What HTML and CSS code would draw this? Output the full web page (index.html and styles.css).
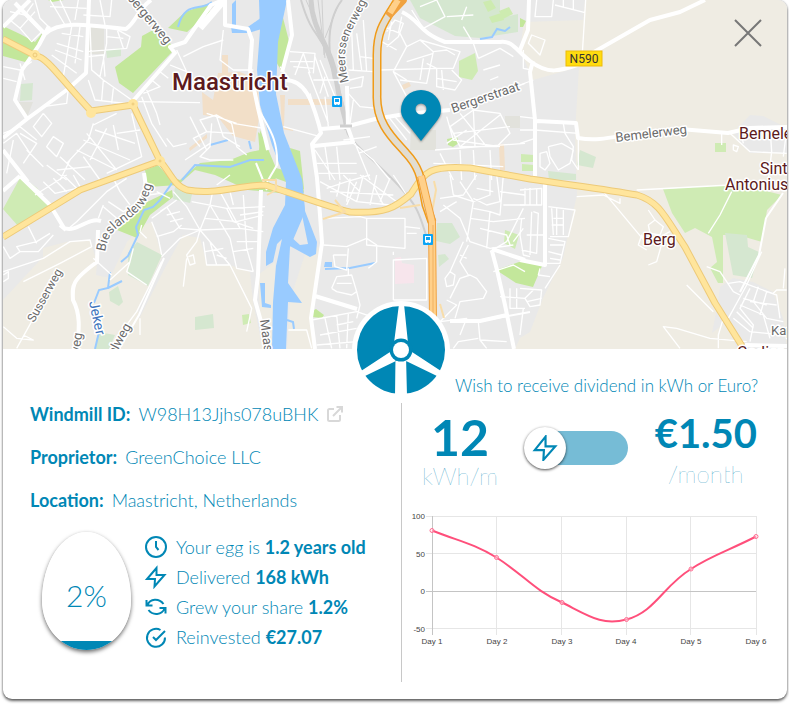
FILE: index.html
```
<!DOCTYPE html>
<html lang="en">
<head>
<meta charset="utf-8">
<meta name="viewport" content="width=device-width, initial-scale=1">
<title>Windmill details</title>
<link rel="stylesheet" href="styles.css">
</head>
<body>
<main class="card">
  <section class="map" aria-label="Map of Maastricht">
    <svg class="map-art" viewBox="3 0 784 349" preserveAspectRatio="xMidYMid slice">
      <rect x="3" width="784" height="349" fill="#e9e9e9"/>
      <!-- countryside -->
      <g fill="#efece3">
        <path d="M585 0H787V349H515L520 338 530 332 543 298 563 258 573 212 577 195 575 133 579 67 533 80 520 50 524 22 583 20z"/>
        <path d="M3 300 43 257 43 248 66 242 90 240 97 262 96 275 110 278 127 242 143 225 152 222 162 257 138 310 139 319 165 268 183 235 200 238 207 265 230 265 250 272 253 302 263 349H3z"/>
        <path d="M307 248 323 247 310 318 315 349H287L290 300zM258 275 275 262 275 349H262z"/>
      </g>
      <path d="M720 287 733 278 753 282 773 292 783 318 787 349H737L726 322 712 333 717 308zM733 133 750 115 763 116 787 128V153H750z" fill="#e9e9e9"/>
      <!-- parks -->
      <g fill="#c3e79b">
        <path d="M3 26 20 34 35 42 43 32 32 58 25 62 3 56zM48 0h16l-12 2zM115 67 141 47 142 36 153 30 171 44 172 52 133 93 119 83zM168 28 185 12 207 4 210 12 187 32z"/>
        <path d="M258 132 266 140 276 180 262 180zM145 170 158 165 167 175 180 180 200 163 230 160 250 152 260 150 267 180 280 193 248 190 215 175 195 170 178 185 148 187zM117 230 137 213 147 202 172 190 173 197 150 215 137 238zM281 10 290 45 282 72 275 60zM260 130 276 168 302 175 304 193 289 183 275 178 258 172zM290 148l10 3 4 38-8 3zM520 18l6 3-3 6h-3zM447 139l10-2 2 6-6 4-5-2zM496 270 522 261 542 266 533 287 516 283zM312 311l4-2 8 6-2 3-10-1z"/>
      </g>
      <g fill="#cfebb4">
        <path d="M3 209 21 176 37 188 50 207 18 226zM663 189 737 184 782 195 767 210 762 242 738 235 723 235 723 283 718 283 710 268 717 262 712 237 695 228 685 233 672 213zM459 61 475 53 478 71 472 80 459 77zM505 230l14 5-4 14-11-6zM521 154l13 1v7h-13zM522 164l12 1v6h-12zM715 143h11v9h-11zM242 315l7-1 2 9-8 2z"/>
      </g>
      <g fill="#d5e7d0">
        <path d="M106 50 121 48 121 56 107 58zM21 84 33 83 32 100 20 101zM410 0H500V18L518 14V32L480 38 455 36 420 18zM437 223 452 223 460 237 450 244 436 241zM438 255l7-1 4 5-10 8zM128 253 137 242 162 255 148 286 128 275zM109 292 118 286 123 302 119 306 110 301zM98 332 115 335 109 349H95zM195 317 213 314 214 328 195 330zM175 187 193 190 190 203 173 199zM580 150 596 157 593 168 577 165zM548 171l28 3v6h-27zM725 233 747 235 748 247 759 252 752 278 733 275z"/>
        <path d="M483 2l8-2 5 8-8 4zM499 11l10-4 4 7-10 5zM489 17l12-4 3 7-12 3z" fill="#cdebb0"/>
      </g>
      <path d="M213 100 218 73 240 72 258 80 259 118 255 142 233 136 218 117 203 115 202 92zM222 55h6v20h-6zM189 148l18-14v4l-17 13z" fill="#f2dfc8"/>
      <g fill="#e2e2dc"><path d="M88 36 89 27h15v27H89zM411 130h25v20h-26zM505 116h15v12h-15zM18 102h15l-7 18z"/></g>
      <path d="M395 258l6-1 1 6 12 2v18l-19 1z" fill="#f7e5ec"/>
      <g fill="#f2dfc8"><path d="M280 95h5l-1 32 9 2v2l-11-2zM288 99h45v6h-45zM402 85l7-3 2 4-8 4zM499 144h5l1 26h-5z"/></g>
      <!-- river -->
      <g fill="#99cbff">
        <path d="M259 0H287L278 42 276 94 284 133 302 179 305 212 290 247 288 283 302 303 288 302 286 349H272L273 302 276 266 282 239 277 244 273 262 266 266 266 252 273 228 285 205 286 182 272 145 260 105 257 70 260 30z"/>
        <path d="M302 179 305 211 317 242 316 254 310 257 288 245 290 236 300 245 308 244 302 215z"/>
        <path d="M231 27 245 29 262 17V29L248 33 232 33zM236 0v26h-4V4zM325 262h7v5h-8zM260 283l5 0v20l6 2v3l-9-1z"/>
      </g>
      <g fill="none" stroke="#99cbff" stroke-width="2">
        <path d="M178 27C185 0 200 12 212 2M172 183 160 200 153 207 144 210 136 227 138 235 128 256 121 262M110 272 108 288 99 290 94 303M108 288 122 281M99 332 95 349M182 180 195 165 230 167 250 160 264 160M325 269 350 268 375 263M480 39 492 37 497 29 505 31 510 27M287 320 293 322 294 329M210 145 228 140M249 141l2 8"/>
      </g>
      <!-- railway -->
      <g fill="none" stroke="#cfcfcf">
        <path d="M301 0C312 38 320 32 327 54S345 100 347 132C350 142 380 165 399 186S419 213 426 235" stroke-width="2"/>
        <path d="M311 0C312 31 332 48 336 78S344 107 347 130" stroke-width="5"/><path d="M342 0C322 26 331 65 334 80" stroke-width="2"/>
        <path d="M306 0 326 46M318 0 325 58M322 0 324 55M337 8 325 38" stroke-width="1"/>
      </g>
      <!-- side streets, drawn per map tile at three times the final scale -->
      <g class="streets">
        <g transform="scale(.333333)">
          <path d="M30 60 60 85 95 125 125 95 75 45 30 35M60 85 105 35M75 45 100 10M105 0 120 55 150 85M150 0 195 75M180 0 215 75M235 0 225 60M150 20 260 25M250 45 330 50 335 0M300 0 315 75M170 130 250 155M215 80 190 230M240 80 225 190M185 100 250 110M165 150 245 180M155 165 230 220M320 80 320 130 300 230 275 210M350 85 370 145M320 110 370 115M270 75 275 210 310 240 395 300M265 170 310 165 315 230M335 80 390 110 380 145 260 155M10 200 60 210 95 185M10 235 50 245M60 190 75 240M205 265 200 310 130 320M265 240 285 300 375 310M310 240 305 300M340 265 335 310M415 305 600 308M425 290 455 370 500 440M440 270 470 340 480 375M455 240 480 260 430 280M480 215 505 235M530 150 560 215 510 195M550 170 610 140 670 120M280 370 265 420 200 490M280 375 350 340M395 340 425 470 320 520M285 390 405 430M250 420 390 480M230 450 350 510M260 400 350 510M320 385 270 480M340 375 355 450M350 400 420 390M10 400 60 380 110 420M10 430 50 400 90 460M40 420 20 520M60 400 110 430 70 490M80 450 130 500M130 340 155 370 125 410 100 380 130 340M160 410 190 430 170 470 140 440zM180 470 255 540M170 510 270 500M210 480 180 540M250 470 300 540M140 495 200 540"/>
          <path d="M600 440 580 415 620 395 600 360 650 345 695 370 710 440 740 465M620 340 710 370M620 395 700 400M635 370 630 440 600 470 630 480 700 480M650 350 670 410 720 440M700 370 790 385M555 480 630 430M570 350 620 450M500 415 520 440 560 430M670 90 660 180 700 210 760 210"/>
        </g>
        <g transform="translate(260) scale(.333333)">
          <path d="M90 155 165 160 160 220M90 185 160 185M105 225 130 160 150 220M100 200 160 205M145 215 205 370M165 170 205 290M180 180 225 290M160 240 240 240M150 280 180 385M195 290 205 380M90 240 60 200M270 240 310 230 305 260 270 265M265 210 340 215M275 90 280 210M290 100 305 210M310 60 320 215M265 280 300 320 350 325M280 300 270 370M300 170 340 175M370 80 420 100 440 140 400 215 440 240M380 95 405 60 430 70 415 110 380 140M365 125 410 150M395 65 385 120M425 50 415 100M360 210 530 205M440 140 480 120 520 155 500 250 420 240M480 120 600 155 580 205 530 205 500 190M520 155 560 150 585 165M440 185 520 160M490 175 480 240M400 215 440 290 460 350M530 205 530 260 585 270 605 240 575 210M530 235 590 245M545 210 550 270M610 80 640 130 655 175M605 60 620 20M655 175 720 145 760 170M670 210 720 195M690 240 715 230M480 20 530 0 555 50 490 85 455 30M560 50 640 45"/>
          <path d="M385 350 440 420M400 345 450 400M560 350 580 420 720 440M570 380 640 330 720 340 750 400 710 440 600 440zM580 400 750 380M600 340 680 440M640 330 645 440M720 345 600 440M560 430 620 390M525 450 795 430M620 320 795 250M540 460 580 540M600 450 605 540M640 450 645 540M690 450 695 540M520 490 730 500M250 420 330 410M280 430 340 480 390 540M165 450 225 540M195 440 210 540M170 490 290 490M175 520 290 520M230 440 240 540M285 430 330 540M295 460 350 440M70 380 180 410M180 280 195 230"/>
        </g>
        <g transform="translate(520) scale(.333333)">
          <path d="M105 15 195 38M50 0 45 50 95 50 100 0M130 0V20M160 0V28M197 0 187 160M35 105 75 120 60 165 25 130zM0 255 40 240M10 150 10 205 35 210M45 390 175 400M130 370 135 400 160 440 155 480 175 510M85 440 90 470 115 510 150 490 160 450 125 430 85 440M60 460 80 455 90 490 75 510 60 500zM0 350 45 355M0 390 45 390M0 430 45 415M175 415 175 510M605 400V435M640 435 655 440 650 455 640 450zM630 400 690 455 800 460M750 380 755 455 745 540M660 385 670 430M800 390 790 470"/>
        </g>
        <g transform="translate(0 175) scale(.333333)">
          <path d="M85 20 130 60M130 20 165 55 230 40M160 10 200 50M190 0 230 40M220 0 240 35M105 60 200 0M10 290 130 250 210 200 270 195 275 215 180 265 70 320M10 215 30 250 60 230 50 215 110 200 150 175M60 230 115 230 160 180M85 155 110 205M10 300 25 290 25 310 10 320M200 165 230 140 320 50 380 10M310 95 350 130M325 80 370 110 400 90M295 130 310 90M10 455 50 490 100 495 70 480M50 520 100 430M280 250 335 300M330 315 390 260 380 290 440 330M390 260 400 220M425 150 420 170 440 190M455 140 475 190 485 240M485 245 540 190 600 165 630 90M485 260 440 350 410 410 380 450M500 95 540 160 600 165M470 185 520 170 545 150M455 130 530 75M480 110 510 90M500 120 540 110M510 140 550 130M520 50 560 95 600 165 690 270M575 80 680 100 795 95M640 40 630 90 690 190 710 280 760 290M660 50 720 160M690 50 700 90M615 130 710 140 790 120M600 165 720 160 790 170M630 200 650 270 690 270M610 200 620 270 650 270M615 230 670 220M650 240 680 250M680 100 700 140 760 160M730 60 740 220 760 290M700 230 760 220M600 165 590 200 560 240 570 270 585 265 580 240 565 245M560 250 550 335M690 270 740 370 755 400 740 470M420 430 420 480M470 50 510 70M445 60 480 55M650 30 690 0M720 120 790 110M710 200 780 200M340 10 360 50 390 90"/>
        </g>
        <g transform="translate(260 175) scale(.333333)">
          <path d="M180 20 290 80 390 90 450 60M200 40 260 20 330 0M230 65 240 20M260 90 290 20M290 80 310 0M330 90 350 0M370 90 340 30M210 50 400 60M250 0 300 50M300 0 410 80M390 10 360 80M270 10 260 80M420 90 440 60 400 0M190 130 300 125 320 130 435 130 435 220 320 210 320 130M435 155 480 160M440 175 470 175M190 210 260 215 320 190 350 210 350 260 325 280M220 240 225 275 260 285 265 220M220 240 260 240M400 375 400 255 500 250 500 375 400 375M400 230V240M215 340 230 305 275 300 290 350 275 360 230 350 215 340M230 325 275 325M265 280 265 300M290 350 300 390 290 430M155 435 290 410 350 430M195 430 215 520M230 420 240 520M265 415 260 520M180 480 290 460M170 510 290 500M230 450 280 440M540 70 610 60 650 0M550 90 600 130 630 200 690 220 760 210M540 110 590 80M570 0 580 60 640 80 620 200M600 20 640 80 690 60 690 0M640 70 680 90 720 80 710 0M650 40 700 50M630 130 700 140 795 130M640 100 690 110 680 220M660 160 740 180 750 210M690 110 720 120 730 0M720 50 795 60M730 90 795 90M610 200 570 290M600 240 620 250M570 290 585 300 580 330 560 335 555 310zM570 370 600 310 630 300 650 310 680 350 670 370 600 380 585 430M625 300 600 260 625 210M560 375 590 390 540 440M655 440 660 495 680 520M655 490 595 500 580 520M540 440 620 430 600 480M660 495 740 500M720 365 795 370M750 340V400H795M770 340V400M690 230 740 200 790 100M700 290 760 270 795 290M760 200 790 160M85 465H140L155 520"/>
        </g>
        <g transform="translate(520 175) scale(.333333)">
          <path d="M0 45 65 40 65 90 0 90M15 40V90M30 40V90M50 40V90M5 130 0 180 10 240 30 245M40 110 55 115 50 235 5 225M35 110 30 240M20 180 75 180M85 95 165 105 145 185 90 185M95 100 100 180M110 100V180M130 105V180M100 130H130M95 150H130M85 190 135 200 120 265 75 265M90 210H130M85 230 125 240M90 250 120 255M75 340 120 270M60 280 55 300 90 305M0 340 65 345 60 390 30 395 15 370 40 345M20 380 65 370M10 400 0 480M170 65 250 60 300 85 300 70M250 50 375 200 365 180 355 210 380 225M385 105 405 135 430 155 420 180 390 175 385 150 405 135M430 180 450 170M430 190 410 260 385 270M350 45 630 30M635 50 600 120 565 175M560 275 600 290 640 350 660 360M500 330 580 410M480 520 430 455 470 460 520 475 570 490 680 500M610 430 595 480 595 520M625 430 680 330 725 230M625 325 660 320 770 360 780 430M690 340 660 400 700 450 690 500M670 370 740 390M660 390 730 420M650 410 700 460M715 335 700 380 740 430 790 440M740 350 720 420M640 430 690 470 790 480M760 355 770 345 800 345M795 280 790 340M730 420 750 490M770 390 690 380"/>
        </g>
      </g>
      <!-- through roads -->
      <g fill="none" stroke="#fff" stroke-width="4" stroke-linejoin="round">
        <path d="M3 138 27 119 68 89 86 73 88 26 89 0M3 27 30 0 M15 3 45 34M45 34C62 18 100 27 126 29 137 21 137 10 151 0M49 26 39 45 22 70 15 100 28 120M223 0 211 5 185 42 170 47 175 53 133 101" />
        <path d="M200 28 224 0" stroke-width="7"/>
        <path d="M225 0V25L248 29 252 40 250 70 258 108 268 150M288 0 292 35 282 72M285 80C307 80 313 105 319 125L321 133 312 144 317 178 320 215 322 243 311 318 315 349M321 129 345 127 375 119 405 114 450 110M347 86 348 128 353 142 314 146M402 12C420 20 418 32 445 42H500C512 40 516 50 530 61 548 75 560 71 580 64M533 61 530 72 535 120V176M520 50 528 30 529 0M587 56 650 20 680 12 705 0M537 121 576 123 578 138C600 142 615 136 637 133L680 129 728 133 750 128 787 127M545 183 545 265 520 260M261 190 258 275 255 300 262 325M20 176 50 205 64 228C77 233 87 217 101 221M98 230 97 262C72 280 72 285 73 300 81 315 79 330 77 349M3 191 20 176M3 150 28 182M60 225 66 230M144 173 146 187 139 201M492 251 497 270 505 305 514 349M492 249 525 260M315 296 357 309M450 321H480L507 315M745 345 787 346"/>
        <path d="M766 218 759 255 740 292M766 218 783 193M164 258 139 315 119 349M480 321 530 312M256 163 267 190M260 112C270 130 278 140 277 165L267 182" stroke-width="2"/>
      </g>
      <path d="M340 126h12" stroke="#cfcfcf" stroke-width="3"/>
      <!-- main roads -->
      <g fill="none" stroke-linejoin="round">
        <path stroke="#edca79" stroke-width="7" d="M3 39 36 56C47 57 60 78 91 111L133 105 160 161C170 172 174 186 187 190 215 195 235 186 265 185 295 194 325 206 350 212 385 214 395 208 411 194 425 172 428 165 470 168L530 179C585 187 610 190 637 195 660 202 665 217 685 247L715 303 742 346M160 161 80 190 3 237"/>
        <path stroke="#ffe59c" stroke-width="5" d="M3 39 36 56C47 57 60 78 91 111L133 105 160 161C170 172 174 186 187 190 215 195 235 186 265 185 295 194 325 206 350 212 385 214 395 208 411 194 425 172 428 165 470 168L530 179C585 187 610 190 637 195 660 202 665 217 685 247L715 303 742 346M160 161 80 190 3 237"/>
        <g fill="#ffe59c"><circle cx="35" cy="55" r="5"/><circle cx="160" cy="161" r="5"/><circle cx="91" cy="113" r="5"/><circle cx="133" cy="104" r="5"/></g>
        <g stroke="#edca79"><circle cx="35" cy="55" r="2"/><circle cx="160" cy="161" r="1"/><circle cx="133" cy="104" r="1"/></g>
        <path d="M323 219 345 212 335 200M262 180h14v10l-9 5M400 208 420 205M434 181 436 190 432 212M440 304 444 318" stroke="#f8dda9" stroke-width="2"/>
      </g>
      <g fill="none" stroke-linejoin="round">
        <path d="M398 0C384 22 377 30 377 55V95C376 125 395 140 406 153 421 169 421 180 426 205L432 222" stroke="#f09b18" stroke-width="9"/>
        <path d="M398 0C384 22 377 30 377 55V95C376 125 395 140 406 153 421 169 421 180 426 205L432 222" stroke="#e2ddd1" stroke-width="6"/>
        <path d="M393 0 403 0 388 16M421 176 432 222 433 320" stroke="#f0a240" stroke-width="8"/>
        <path d="M398 0 390 13M421 176 432 222 433 320" stroke="#ffd08a" stroke-width="6"/>
        <path d="M433 225V320" stroke="#f0b060" stroke-width="1"/>
      </g>
      <!-- transit stops -->
      <g transform="translate(332 96)"><rect width="10" height="11" rx="1" fill="#0da4f5"/><path d="M2 2h6v6H7l1 1H6L5 8 4 9H2l1-1H2zM3 3v3h4V3z" fill="#fff" fill-rule="evenodd"/></g>
      <g transform="translate(423 234)"><rect width="10" height="11" rx="1" fill="#0da4f5"/><path d="M2 2h6v6H7l1 1H6L5 8 4 9H2l1-1H2zM3 3v3h4V3z" fill="#fff" fill-rule="evenodd"/></g>
      <defs>
        <path id="meerssenerweg" d="M349 82C341 50 345 42 361 13L371-8"/>
        <path id="bieslanderweg" d="M105 252C108 232 116 229 129 219 142 208 147 204 152 184"/>
      </defs>
      <g class="road-label">
        <text text-anchor="end" transform="translate(166 45) rotate(50)">bergerweg</text>
        <text class="narrow"><textPath href="#meerssenerweg">Meerssenerweg</textPath></text>
        <text><textPath href="#bieslanderweg">Bieslanderweg</textPath></text>
        <text class="narrow" transform="translate(34 323) rotate(-61)">Susserweg</text>
        <text transform="translate(79 357) rotate(-82)">weg</text>
        <text transform="translate(115 356) rotate(-61)">elweg</text>
        <text transform="translate(260 320) rotate(82)">Maasboulevard</text>
        <text transform="translate(453 113) rotate(-19)">Bergerstraat</text>
        <text transform="translate(616 142) rotate(-7)">Bemelerweg</text>
        <text x="771" y="335">Kapel</text>
      </g>
      <text class="water-label" transform="translate(89 302) rotate(78)">Jeker</text>
      <rect x="566" y="51" width="36" height="15" fill="#ffdc0f" stroke="#eebb0b"/>
      <text class="shield" x="584" y="63" text-anchor="middle">N590</text>
      <text class="city" x="172" y="90">Maastricht</text>
      <g class="village">
        <text x="643" y="245">Berg</text><text x="739" y="139">Bemelen</text><text x="760" y="174">Sint</text><text x="725" y="190">Antoniusbank</text><text x="737" y="358">Cadier</text>
      </g>
      <path class="pin" d="M421 141 406 122C402 117 401 114 401 110A20 20 0 0 1 441 110C441 114 440 117 436 122zM421 103.500a5.500 5.500 0 1 0 0 11 5.500 5.500 0 0 0 0-11z" fill-rule="evenodd"/>
    </svg>
    <button class="close" aria-label="Close"><svg viewBox="0 0 28 28"><path d="M1 1 27 27M27 1 1 27"/></svg></button>
    <svg class="emblem" viewBox="-49 -49 98 98" aria-hidden="true">
      <circle r="49" fill="#fff"/><circle r="44" fill="#0087b5"/>
      <path d="M-2-46H3L7-7H-7zM-5.500 6H5L6 46H-6zM8-3 11 2 40 21 36 26 3 10zM-8-3-11 2-40 21-36 26-3 10z" fill="#fff"/>
      <circle r="11.500" fill="#0087b5"/><circle r="8" fill="#fff"/>
    </svg>
  </section>
  <div class="details">
    <section class="facts">
      <dl class="identity">
        <div><dt>Windmill ID:</dt><dd>W98H13Jjhs078uBHK <a class="external" href="#windmill" aria-label="Open windmill"><svg viewBox="0 0 16 16"><path d="M7 3H2.500Q1 3 1 4.500V13.500Q1 15 2.500 15H11.500Q13 15 13 13.500V9M6 10 14 2M9.500 1H15V6.500"/></svg></a></dd></div>
        <div><dt>Proprietor:</dt><dd>GreenChoice LLC</dd></div>
        <div><dt>Location:</dt><dd>Maastricht, Netherlands</dd></div>
      </dl>
      <div class="progress">
        <div class="egg"><span>2%</span></div>
        <ul class="stats">
          <li><svg viewBox="0 0 24 24"><circle cx="12" cy="12" r="10"/><path d="M12 6V12L14.500 15"/></svg><span>Your egg is <b>1.2 years old</b></span></li>
          <li><svg viewBox="0 0 24 24"><path d="M12.500 3 3 14H11L10.500 21.500 20.500 10H12.500z"/></svg><span>Delivered <b>168 kWh</b></span></li>
          <li><svg viewBox="0 0 24 24"><path d="M2.500 5V10.500H8.500M21.500 18.500V13H15.500M3.500 10C6 3.500 15 3 19.500 9M4.500 15C9 21 18 20 20.500 13.500"/></svg><span>Grew your share <b>1.2%</b></span></li>
          <li><svg viewBox="0 0 24 24"><path d="M21 12.500A9 9 0 1 1 16.500 5M9 12 12 15 21 6"/></svg><span>Reinvested <b>€27.07</b></span></li>
        </ul>
      </div>
    </section>
    <section class="dividend">
      <h2>Wish to receive dividend in kWh or Euro?</h2>
      <div class="choice">
        <p class="amount energy"><strong>12</strong><span>kWh/m</span></p>
        <label class="switch"><input type="checkbox" aria-label="Receive dividend in Euro"><span class="knob"><svg viewBox="0 0 24 24"><path d="M12.500 1.500 2.500 14H11L10.500 23 21.500 10.500H12.500z"/></svg></span></label>
        <p class="amount money"><strong>€1.50</strong><span>/month</span></p>
      </div>
      <svg class="chart" viewBox="402 508 370 144" role="img" aria-label="Output per day">
        <g fill="none" stroke="#e6e6e6"><path d="M426 516.500H756M426 553.500H756M426 628.500H756M496.500 516V635M561.500 516V635M626.500 516V635M690.500 516V635M756.500 516V635"/></g>
        <path d="M426 591.500H756M432.500 516V635" stroke="#c4c4c4" fill="none"/>
        <path d="M432 530.500C458 541 473 543 496.500 557.500 524 575 535 591 562 602.500 589 616 602 626 626.500 619.500 655 612 663 586 691 569 710 556 730 550 756 536.500" fill="none" stroke="#ff4f7b" stroke-width="2"/>
        <g fill="#fff" fill-opacity=".4" stroke="#ff6d92"><circle cx="432" cy="530.500" r="2"/><circle cx="496.500" cy="557.500" r="2"/><circle cx="562" cy="602.500" r="2"/><circle cx="626.500" cy="619.500" r="2"/><circle cx="691" cy="569" r="2"/><circle cx="756" cy="536.500" r="2"/></g>
        <g class="axis" text-anchor="end"><text x="425" y="519">100</text><text x="425" y="557">50</text><text x="425" y="594">0</text><text x="425" y="632">-50</text></g>
        <g class="axis" text-anchor="middle"><text x="432" y="644">Day 1</text><text x="497" y="644">Day 2</text><text x="562" y="644">Day 3</text><text x="626" y="644">Day 4</text><text x="691" y="644">Day 5</text><text x="756" y="644">Day 6</text></g>
      </svg>
    </section>
  </div>
</main>
</body>
</html>
```
FILE: styles.css
```
* { box-sizing: border-box; }
body { margin: 0; background: #fff; color: #0087b5; font-family: Lato, "Liberation Sans", sans-serif; font-size: 18px; font-weight: 300; line-height: 24px; }
h2, p, dl, dd, ul { margin: 0; padding: 0; font-weight: inherit; }
b, dt { font-weight: 700; }
.card { margin: 0 2px 6px 3px; border-radius: 9px; background: #fff; box-shadow: 0 2px 3px rgba(0, 0, 0, .6), 0 0 2px rgba(0, 0, 0, .3); }
.map { position: relative; height: 349px; }
.map-art { display: block; width: 100%; height: 100%; border-radius: 9px 9px 0 0; font-family: Roboto, sans-serif; }
.streets { fill: none; stroke: #fff; stroke-width: 4px; stroke-linejoin: round; }
.map-art text { paint-order: stroke; stroke: #fff; stroke-width: 3px; stroke-linejoin: round; font-weight: 400; }
.road-label { fill: #6b6b6b; font-size: 13px; }
.road-label .narrow { font-size: 12px; }
.water-label { fill: #3f75bd; font-size: 14px; }
.map-art .shield { fill: #333; stroke: none; font-size: 12px; }
.map-art .city { fill: #5c1a20; font-size: 24px; font-weight: 500; }
.village { fill: #5c1a20; font-size: 16px; }
.pin { fill: #0087b5; filter: drop-shadow(0 1px 1px rgba(0, 0, 0, .4)); }
.close { position: absolute; top: 19px; right: 25px; width: 28px; height: 28px; padding: 0; border: 0; background: none; cursor: pointer; }
.close svg { display: block; fill: none; stroke: #777; stroke-width: 2px; }
.emblem { position: absolute; left: 349px; bottom: -50px; width: 98px; }
.details { display: grid; grid-template-columns: 399px 1fr; padding-bottom: 17px; }
.facts { margin-top: 54px; padding: 0 27px; border-right: 1px solid #c8c8c8; min-height: 279px; }
.identity { display: grid; gap: 19px; margin-top: -1px; }
.identity div { display: flex; align-items: center; gap: 8px; }
.identity dd { display: flex; align-items: center; gap: 9px; }
.external { display: block; width: 16px; height: 16px; }
.external svg { display: block; fill: none; stroke: #d8d8d8; stroke-width: 2px; }
.progress { display: flex; gap: 13px; margin-top: 20px; padding-left: 12px; }
.egg { display: flex; align-items: center; justify-content: center; width: 89px; height: 118px; padding-top: 8px; border-radius: 50% / 58% 58% 42% 42%; background: linear-gradient(to top, #0087b5 9px, #fff 9px); box-shadow: 0 2px 4px rgba(0, 0, 0, .6); font-size: 30px; }
.stats { display: grid; gap: 6px; align-content: start; padding-top: 3px; list-style: none; }
.stats li { display: flex; align-items: center; gap: 8px; white-space: nowrap; }
.stats svg { width: 24px; height: 24px; fill: none; stroke: #0087b5; stroke-width: 2px; }
.dividend { padding: 25px 15px 0 0; }
h2 { padding-right: 14px; text-align: right; font-size: 17px; }
.choice { display: flex; justify-content: space-between; align-items: flex-start; padding: 12px 15px 0 20px; }
.amount { display: flex; flex-direction: column; align-items: center; font-size: 24px; font-weight: 100; }
.amount strong { font-weight: 700; }
.amount span { line-height: 24px; }
.energy strong { font-size: 50px; line-height: 54px; }
.money strong { font-size: 40px; line-height: 46px; }
.money span { margin-top: 6px; }
.switch { position: relative; display: flex; align-items: center; width: 104px; height: 42px; margin-top: 17px; }
.switch input { appearance: none; width: 86px; height: 34px; margin: 0 0 0 18px; border-radius: 17px; background: #76bcd6; cursor: pointer; }
.knob { position: absolute; left: 0; top: 0; display: grid; place-items: center; width: 42px; height: 42px; border-radius: 50%; background: #fff; box-shadow: 0 1px 3px rgba(0, 0, 0, .7); }
.knob svg { width: 26px; height: 26px; fill: none; stroke: #0087b5; stroke-width: 2px; }
.switch input:checked + .knob { left: 62px; }
.chart { display: block; width: 100%; margin-top: 20px; }
.axis { fill: #444; font-family: "Liberation Sans", sans-serif; font-size: 8px; font-weight: 400; }
```
